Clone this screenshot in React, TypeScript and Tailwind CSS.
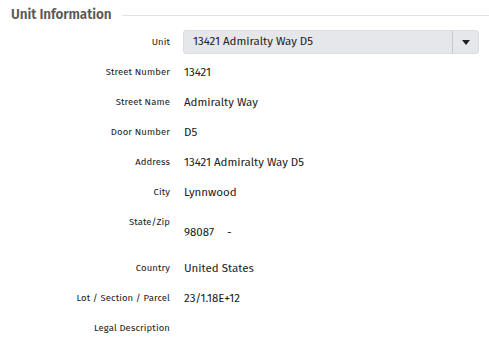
import React from 'react'

const rows: Array<{ label: string; value?: string; tall?: boolean }> = [
  { label: 'Street Number', value: '13421' },
  { label: 'Street Name', value: 'Admiralty Way' },
  { label: 'Door Number', value: 'D5' },
  { label: 'Address', value: '13421 Admiralty Way D5' },
  { label: 'City', value: 'Lynnwood' },
  { label: 'State/Zip', tall: true },
  { label: 'Country', value: 'United States' },
  { label: 'Lot / Section / Parcel', value: '23/1.18E+12' },
  { label: 'Legal Description', value: '' },
]

function Label({ children }: { children: React.ReactNode }) {
  return (
    <div className="w-[170px] shrink-0 text-right text-[9.5px] font-normal leading-[30px] text-[#222] tracking-[0.1px]">
      {children}
    </div>
  )
}

export default function App() {
  return (
    <div
      className="w-[489px] h-[357px] bg-white overflow-hidden"
      style={{ fontFamily: '"Fira Sans", "Open Sans", "Noto Sans", sans-serif' }}
    >
      <div className="flex items-center h-[27px] pl-[11px] pt-[3px]">
        <h3 className="text-[13.5px] font-semibold text-[#585858] tracking-[-0.1px]">Unit Information</h3>
        <div className="ml-[11px] flex-1 h-px bg-[#dce2ee]" />
      </div>

      <div className="flex h-[30px] items-center">
        <Label>Unit</Label>
        <div className="ml-[13px] w-[296px] h-[24px] flex items-stretch rounded-[3px] bg-[#e6e7ea] border border-[#dcdde0]">
          <div className="flex-1 flex items-center pl-[9px] text-[11.5px] text-[#222]">
            13421 Admiralty Way D5
          </div>
          <div className="w-[26px] border-l border-[#c9cacd] flex items-center justify-center">
            <svg width="8" height="5" viewBox="0 0 8 5">
              <path d="M0 0 L8 0 L4 5 Z" fill="#222" />
            </svg>
          </div>
        </div>
      </div>

      {rows.map((r) => (
        <div key={r.label} className={`flex items-start ${r.tall ? 'h-[46px]' : 'h-[30px]'}`}>
          <Label>{r.label}</Label>
          {r.tall ? (
            <div className="ml-[14px] mt-[10px] flex leading-[30px] text-[11.5px] text-[#222]">
              <span>98087</span>
              <span className="ml-[13px]">-</span>
            </div>
          ) : (
            <div className="ml-[14px] leading-[30px] text-[11.5px] text-[#222]">{r.value}</div>
          )}
        </div>
      ))}
    </div>
  )
}
